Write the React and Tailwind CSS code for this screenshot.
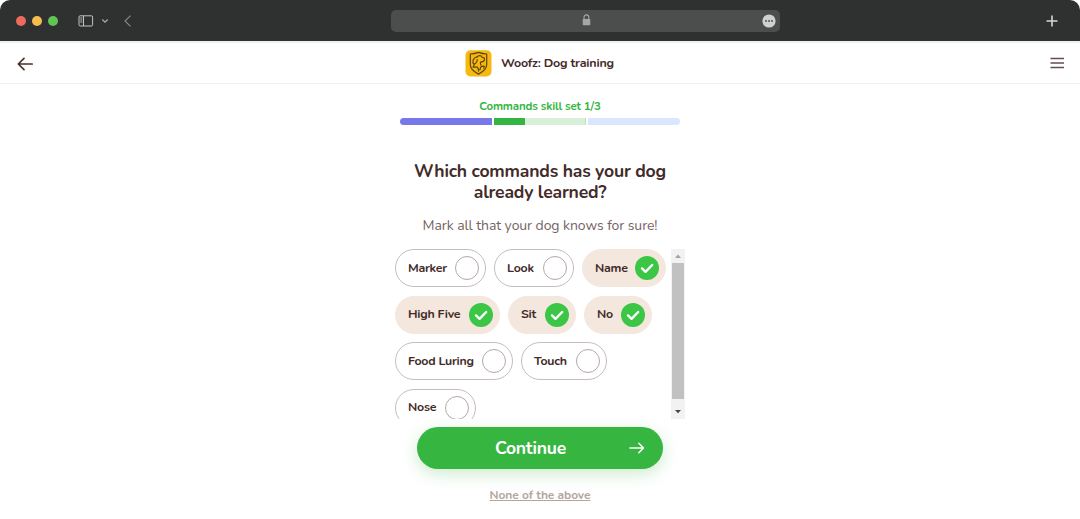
import React, { useState } from 'react';
import clsx from 'clsx';

const ROWS = [
  [
    { name: 'Marker', width: 'w-[91px]' },
    { name: 'Look', width: 'w-[80px]' },
    { name: 'Name', width: 'w-[84px]' },
  ],
  [
    { name: 'High Five', width: 'w-[105px]' },
    { name: 'Sit', width: 'w-[68px]' },
    { name: 'No', width: 'w-[68px]' },
  ],
  [
    { name: 'Food Luring', width: 'w-[118px]' },
    { name: 'Touch', width: 'w-[86px]' },
  ],
  [{ name: 'Nose', width: 'w-[80.5px]' }],
];

function BrowserBar() {
  return (
    <div className="flex h-[41px] shrink-0 items-center rounded-t-[10px] bg-[#2f3130]">
      <div className="flex w-[391px] items-center pl-[15.5px]">
        <div className="flex gap-[6px]">
          <span className="size-[10px] rounded-full bg-[#ed6a5f]" />
          <span className="size-[10px] rounded-full bg-[#f5bf4f]" />
          <span className="size-[10px] rounded-full bg-[#61c554]" />
        </div>
        <svg className="ml-[20px]" width="16" height="12" viewBox="0 0 16 12" fill="none" stroke="#c4c4c4">
          <rect x="1" y="0.8" width="13.6" height="10.2" rx="1.2" />
          <path d="M5.5 1v10M2.3 3h2M2.3 5h2M2.3 7h2" />
        </svg>
        <svg className="ml-[7px]" width="8" height="6" viewBox="0 0 8 6" fill="none" stroke="#aaa" strokeWidth="1.2">
          <path d="M1.3 1.5 4 4.2l2.7-2.7" />
        </svg>
        <svg className="ml-[14px]" width="9" height="12" viewBox="0 0 9 12" fill="none" stroke="#8b8b8b" strokeWidth="1.1">
          <path d="M7.5 .7 2 6l5.5 5.3" />
        </svg>
      </div>
      <div className="flex h-[22px] w-[389px] items-center rounded-[5px] bg-[#4c4e4d] pr-[4px]">
        <svg className="mb-[2px] ml-[191px]" width="9" height="12" viewBox="0 0 9 12">
          <path d="M2 5.5V3.3a2.4 2.4 0 0 1 4.8 0v2.2" fill="none" stroke="#a6a6a6" strokeWidth="1.1" />
          <rect x="0.7" y="5" width="7.6" height="6.3" rx="1" fill="#a6a6a6" />
        </svg>
        <svg className="ml-auto" width="14" height="14" viewBox="0 0 14 14">
          <circle cx="7" cy="7" r="6.6" fill="#d0d0d0" />
          <g fill="#454746">
            <circle cx="4" cy="7" r="0.9" />
            <circle cx="7" cy="7" r="0.9" />
            <circle cx="10" cy="7" r="0.9" />
          </g>
        </svg>
      </div>
      <svg className="ml-auto mr-[22px]" width="12" height="12" viewBox="0 0 12 12" stroke="#d6d6d6" strokeWidth="1.6">
        <path d="M6 .5v11M.5 6h11" />
      </svg>
    </div>
  );
}

function Logo() {
  return (
    <svg width="27" height="27" viewBox="0 0 27 27" fill="none">
      <rect x="0.5" y="0.3" width="26" height="26.2" rx="5" fill="#f5b90f" />
      <g stroke="#5f450c" strokeWidth="1.2" strokeLinecap="round" strokeLinejoin="round">
        <path d="M13.5 2.4c2.6 1 5.2 1.5 8.2 1.6v10.6c0 4.8-4 7.5-8.2 9.5-4.2-2-8.2-4.7-8.2-9.5V4c3-.1 5.6-.6 8.2-1.6z" />
        <path d="M11.9 7C10 6.8 8 9.2 7.9 12c0 1.7 1.4 2.4 2.6 1.4 1.2-1 1.8-2.3 1.7-3.9" />
        <path d="M11.9 7c1.5-1.8 4.3-1.7 5.3.2l2.2.9c.5 2.5-.8 3.9-3.8 3.9-.4 1.2-.3 2.1.3 3" />
        <path d="M9.4 14.2 8.1 17.2h4.2c1.1 1 1.5 2.5 1.2 3.9M14.9 19.8l1.2-3.4 3.1-.3-.4 2.1" />
      </g>
    </svg>
  );
}

function Header() {
  return (
    <header className="flex h-[43px] shrink-0 items-center border-b border-t-2 border-b-[#f1f0f0] border-t-[#f0f0f0] pl-[17px] pr-[16px]">
      <svg className="mt-[2px]" width="17" height="14" viewBox="0 0 17 14" fill="none" stroke="#4b302d" strokeWidth="1.7" strokeLinecap="round" strokeLinejoin="round">
        <path d="M15.2 7H1.5M7 1.3 1.3 7 7 12.7" />
      </svg>
      <div className="ml-[431px] flex items-center gap-[9px]">
        <Logo />
        <span className="whitespace-nowrap text-[12.5px] font-bold tracking-[-0.22px]">Woofz: Dog training</span>
      </div>
      <svg className="ml-auto" width="14" height="12" viewBox="0 0 14 12" stroke="#654d50" strokeWidth="1.5">
        <path d="M0.5 1.6h13.5M0.5 6h13.5M0.5 10.4h13.5" />
      </svg>
    </header>
  );
}

function Progress() {
  return (
    <div className="flex h-[7px] w-[280px] gap-[1.5px] overflow-hidden rounded-full">
      <div className="w-[92px] bg-[#7878eb]" />
      <div className="flex w-[92.5px] border-r border-[#b6e2ba] bg-[#d8efd9]">
        <div className="w-[31px] bg-[#34b541]" />
      </div>
      <div className="flex-1 bg-[#d9e6fc]" />
    </div>
  );
}

function Pill({ name, width, selected, onClick }) {
  return (
    <button
      onClick={onClick}
      className={clsx(
        'flex h-[38px] shrink-0 items-center justify-between rounded-full border pl-[12px] pr-[6px] text-[12.4px] font-bold tracking-[-0.26px]',
        width,
        selected ? 'border-[#f4e7de] bg-[#f4e7de]' : 'border-[#c6bebb] bg-white'
      )}
    >
      <span className="whitespace-nowrap">{name}</span>
      {selected ? (
        <svg width="24" height="24" viewBox="0 0 24 24" fill="none">
          <circle cx="12" cy="12" r="12" fill="#3bc646" />
          <path d="m7 12.4 3.5 3.4L17.2 9" stroke="#fff" strokeWidth="2.4" strokeLinecap="round" strokeLinejoin="round" />
        </svg>
      ) : (
        <span className="size-6 rounded-full border border-[#b3a8a6]" />
      )}
    </button>
  );
}

function Scrollbar() {
  return (
    <div className="flex w-[14px] shrink-0 flex-col items-center bg-[#f2f2f2]">
      <svg width="14" height="14" viewBox="0 0 14 14">
        <path d="M4 9h6L7 5.5z" fill="#a3a3a3" />
      </svg>
      <div className="h-[136px] w-[12px] bg-[#c1c1c1]" />
      <svg className="mt-[5px]" width="14" height="14" viewBox="0 0 14 14">
        <path d="M4 6h6L7 9.2z" fill="#454545" />
      </svg>
    </div>
  );
}

export default function App() {
  const [selected, setSelected] = useState(['Name', 'High Five', 'Sit', 'No']);

  const toggle = (name) => {
    setSelected((prev) => (prev.includes(name) ? prev.filter((n) => n !== name) : [...prev, name]));
  };

  return (
    <div className="flex h-[519px] w-[1080px] flex-col overflow-hidden bg-white font-[Nunito,Lato,sans-serif] text-[#432b29]">
      <BrowserBar />
      <Header />

      <main className="flex flex-col items-center">
        <p className="mt-[14px] h-4 whitespace-nowrap text-[11.5px] font-bold leading-4 tracking-[-0.14px] text-[#34b541]">
          Commands skill set 1/3
        </p>
        <div className="mt-[4px]">
          <Progress />
        </div>
        <h1 className="mt-[36px] whitespace-nowrap text-center text-[17.6px] font-bold leading-[21px] tracking-[-0.2px]">
          Which commands has your dog
          <br />
          already learned?
        </h1>
        <p className="mt-[13px] h-5 whitespace-nowrap text-[14px] leading-5 tracking-[-0.08px] text-[#75635f]">
          Mark all that your dog knows for sure!
        </p>

        <div className="mt-[13px] flex h-[170px] w-[290px] justify-between overflow-hidden">
          <div className="flex flex-col gap-[8.5px]">
            {ROWS.map((row, i) => (
              <div key={i} className="flex gap-2">
                {row.map((item) => (
                  <Pill
                    key={item.name}
                    name={item.name}
                    width={item.width}
                    selected={selected.includes(item.name)}
                    onClick={() => toggle(item.name)}
                  />
                ))}
              </div>
            ))}
          </div>
          <Scrollbar />
        </div>

        <button className="mt-2 flex h-[42px] w-[246px] items-center rounded-full bg-[#36b541] pl-[78px] pr-[18px] text-[17.5px] font-bold tracking-[-0.25px] text-white shadow-[0_5px_16px_rgba(54,181,65,0.25)]">
          Continue
          <svg className="ml-auto" width="16" height="12" viewBox="0 0 16 12" fill="none" stroke="#fff" strokeWidth="1.5" strokeLinecap="round" strokeLinejoin="round">
            <path d="M1 6h13.5M9.8 1.2 14.5 6l-4.7 4.8" />
          </svg>
        </button>
        <a className="mt-[17px] h-[18px] whitespace-nowrap text-[12px] font-bold leading-[18px] tracking-[-0.06px] text-[#b5a59e] underline">
          None of the above
        </a>
      </main>
    </div>
  );
}
